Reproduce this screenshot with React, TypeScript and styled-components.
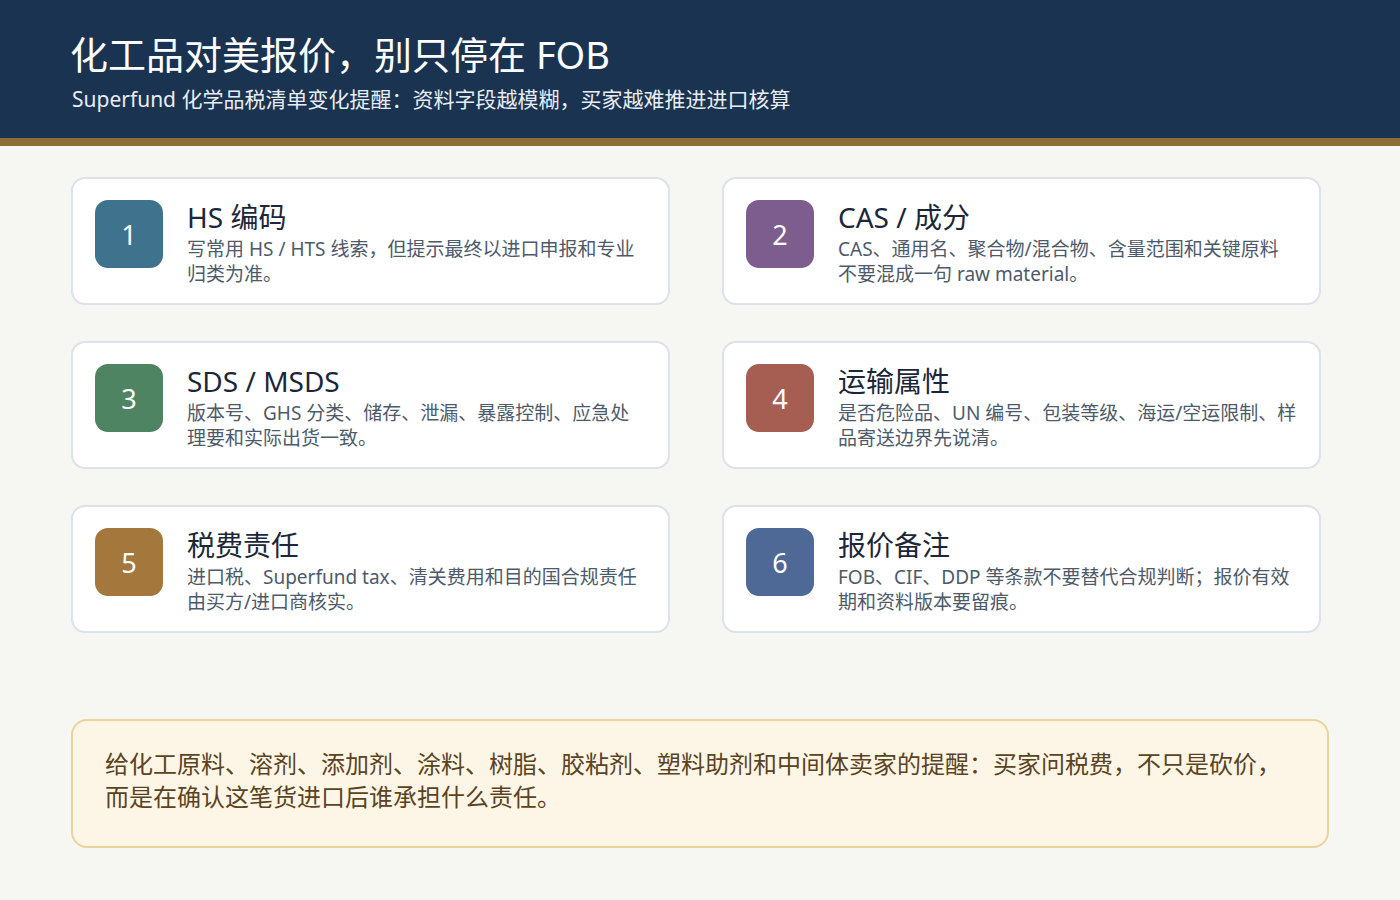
import React from 'react';
import styled, { createGlobalStyle } from 'styled-components';

const Global = createGlobalStyle`
  body { margin: 0; background: #f6f6f2; font-family: "Noto Sans", "Noto Sans CJK SC", sans-serif; }
`;

const Header = styled.header`
  background: #1a3350;
  padding: 30px 70px 0;
  height: 108px;
  border-bottom: 8px solid #8b6d3a;
`;

const Title = styled.h1`
  margin: 0;
  color: #fff;
  font-size: 38px;
  font-weight: 400;
  line-height: 48px;
`;

const Subtitle = styled.div`
  margin-top: 6px;
  color: #e8edf3;
  font-size: 21px;
  line-height: 30px;
  padding-left: 2px;
`;

const Main = styled.main`
  padding: 31px 71px 0;
`;

const Grid = styled.div`
  width: 1250px;
  display: grid;
  grid-template-columns: 599px 599px;
  column-gap: 52px;
  row-gap: 36px;
`;

const Card = styled.div`
  background: #fff;
  border: 2px solid #dde1e8;
  border-radius: 14px;
  height: 124px;
  box-sizing: border-box;
  height: 128px;
  padding: 21px 22px;
  display: flex;
  gap: 24px;
`;

const Badge = styled.div<{ $c: string }>`
  flex: none;
  width: 68px;
  height: 68px;
  border-radius: 13px;
  background: ${p => p.$c};
  color: #fff;
  font-size: 27px;
  display: flex;
  align-items: center;
  justify-content: center;
`;

const CardTitle = styled.div`
  font-size: 28px;
  line-height: 34px;
  color: #1b2738;
  margin-top: 0;
`;

const CardText = styled.div`
  font-size: 19px;
  line-height: 25px;
  color: #4d5a6a;
  margin-top: 3px;
`;

const Note = styled.div`
  margin-top: 86px;
  width: 1258px;
  box-sizing: border-box;
  background: #fdf6e6;
  border: 2px solid #ead49c;
  border-radius: 16px;
  padding: 26px 32px 33px;
  color: #5b4322;
  font-size: 24px;
  line-height: 33px;
`;

const items = [
  { c: '#3e728d', t: 'HS 编码', d: '写常用 HS / HTS 线索，但提示最终以进口申报和专业归类为准。' },
  { c: '#7c5d8e', t: 'CAS / 成分', d: 'CAS、通用名、聚合物/混合物、含量范围和关键原料不要混成一句 raw material。' },
  { c: '#4e8462', t: 'SDS / MSDS', d: '版本号、GHS 分类、储存、泄漏、暴露控制、应急处理要和实际出货一致。' },
  { c: '#a65e52', t: '运输属性', d: '是否危险品、UN 编号、包装等级、海运/空运限制、样品寄送边界先说清。' },
  { c: '#a4773c', t: '税费责任', d: '进口税、Superfund tax、清关费用和目的国合规责任由买方/进口商核实。' },
  { c: '#4f6997', t: '报价备注', d: 'FOB、CIF、DDP 等条款不要替代合规判断；报价有效期和资料版本要留痕。' },
];

export default function App() {
  return (
    <>
      <Global />
      <Header>
        <Title>化工品对美报价，别只停在 FOB</Title>
        <Subtitle>Superfund 化学品税清单变化提醒：资料字段越模糊，买家越难推进进口核算</Subtitle>
      </Header>
      <Main>
        <Grid>
          {items.map((it, i) => (
            <Card key={i}>
              <Badge $c={it.c}>{i + 1}</Badge>
              <div>
                <CardTitle>{it.t}</CardTitle>
                <CardText>{it.d}</CardText>
              </div>
            </Card>
          ))}
        </Grid>
        <Note>
          给化工原料、溶剂、添加剂、涂料、树脂、胶粘剂、塑料助剂和中间体卖家的提醒：买家问税费，不只是砍价，而是在确认这笔货进口后谁承担什么责任。
        </Note>
      </Main>
    </>
  );
}
